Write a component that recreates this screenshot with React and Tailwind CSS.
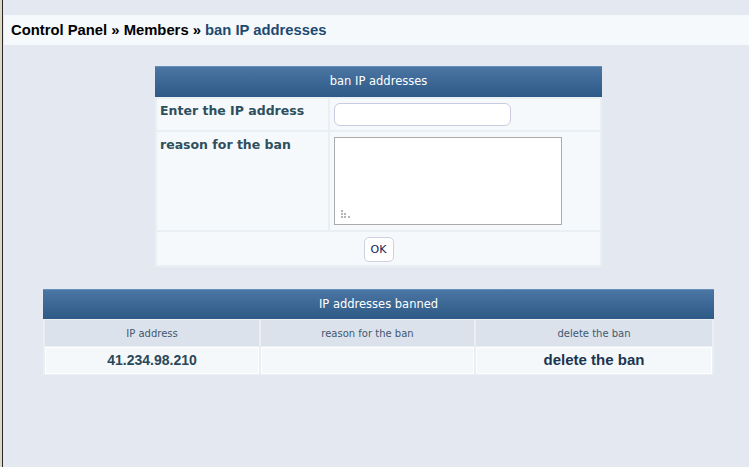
import { useState } from "react";

const head = "flex items-center justify-center border-t border-[#6690bc] bg-linear-to-b from-[#4b76a3] to-[#2d5987] font-['DejaVu_Sans',sans-serif] text-[11.5px] text-white";

function GripDots() {
  // little dotted resize grip in the textarea corner
  return (
    <svg className="pointer-events-none absolute bottom-[6px] left-[7px]" width="11" height="9" viewBox="0 0 11 9">
      <g fill="#b5b5b5">
        <rect x="0" y="0" width="2" height="2" />
        <rect x="0" y="3" width="2" height="2" />
        <rect x="3" y="3" width="2" height="2" />
        <rect x="0" y="6" width="2" height="2" />
        <rect x="3" y="6" width="2" height="2" />
        <rect x="7" y="6" width="2" height="2" />
      </g>
    </svg>
  );
}

function BanForm() {
  const [ip, setIp] = useState("");
  const [reason, setReason] = useState("");

  return (
    <div className="ml-[149px] w-[447px] bg-[#eaeff4]">
      <div className={`${head} h-[31px]`}>ban IP addresses</div>
      <table className="w-full border-separate border-spacing-[2px]">
        <tbody>
          <tr>
            <td className="h-[31px] w-[171px] bg-[#f6f9fb] px-[3px] pt-[3px] align-top font-['DejaVu_Sans',sans-serif] text-[12.5px] font-bold text-[#2e4f5e]">
              Enter the IP address
            </td>
            <td className="bg-[#f6f9fb] pl-[4px] align-top">
              <input
                value={ip}
                onChange={(e) => setIp(e.target.value)}
                className="mt-[4px] h-[23px] w-[177px] rounded-[6px] border border-[#cbcbdf] bg-white px-2 text-[12px] outline-none"
              />
            </td>
          </tr>
          <tr>
            <td className="h-[98px] bg-[#f6f9fb] px-[3px] pt-[4px] align-top font-['DejaVu_Sans',sans-serif] text-[12.5px] font-bold text-[#2e4f5e]">
              reason for the ban
            </td>
            <td className="bg-[#f6f9fb] pl-[4px] align-top">
              <div className="relative mt-[5px] h-[88px] w-[228px]">
                <textarea
                  value={reason}
                  onChange={(e) => setReason(e.target.value)}
                  className="block h-full w-full resize-none border border-[#ababab] bg-white p-1 text-[12px] outline-none"
                />
                <GripDots />
              </div>
            </td>
          </tr>
          <tr>
            <td colSpan={2} className="h-[33px] bg-[#f6f9fb] text-center align-middle">
              <button className="h-[25px] w-[30px] rounded-[5px] border border-[#cfd0e0] bg-white font-['DejaVu_Sans',sans-serif] text-[11px] text-[#151a55]">
                OK
              </button>
            </td>
          </tr>
        </tbody>
      </table>
    </div>
  );
}

function BannedList() {
  const banned = [{ ip: "41.234.98.210", reason: "" }];

  return (
    <div className="ml-[37px] mt-[22px] w-[671px] bg-[#eaeff4]">
      <div className={`${head} h-[30px]`}>IP addresses banned</div>
      <table className="w-full border-separate border-spacing-x-[2px] border-spacing-y-[1px]">
        <tbody>
          <tr className="font-['DejaVu_Sans',sans-serif] text-[10px] text-[#3f5870]">
            <td className="h-[26px] w-[214px] bg-[#dce2eb] text-center">IP address</td>
            <td className="w-[213px] bg-[#dce2eb] text-center">reason for the ban</td>
            <td className="bg-[#dce2eb] text-center">delete the ban</td>
          </tr>
          {banned.map((row) => (
            <tr key={row.ip} className="font-['Liberation_Sans',sans-serif] font-bold">
              <td className="h-[27px] border border-white bg-[#f5f8fa] text-center text-[14px] text-[#2a4858]">{row.ip}</td>
              <td className="border border-white bg-[#f5f8fa]">{row.reason}</td>
              <td className="border border-white bg-[#f5f8fa] text-center text-[15px] text-[#1b3450]">delete the ban</td>
            </tr>
          ))}
        </tbody>
      </table>
    </div>
  );
}

export default function App() {
  return (
    <div className="flex h-[467px] w-full bg-[#ded9c6] pl-[2px]">
      <div className="h-full flex-1 border-l border-[#2a2a2a] bg-[#e4e8f0] pl-[3px]">
        <div className="ml-[-2px] mt-[15px] flex h-[30px] items-center whitespace-pre bg-[#f6f9fb] pl-[7px] font-['Liberation_Sans',sans-serif] text-[14.8px] font-bold text-black">
          <span>Control Panel » Members » </span>
          <span className="text-[#1d4a72]">ban IP addresses</span>
        </div>
        <div className="mt-[21px]">
          <BanForm />
        </div>
        <BannedList />
      </div>
    </div>
  );
}
